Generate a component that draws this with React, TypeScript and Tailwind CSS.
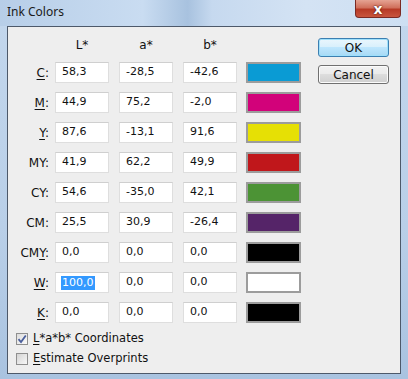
import React from "react";

type Row = { label: React.ReactNode; v: [string, string, string]; color: string; selected?: boolean };

const U = ({ c }: { c: string }) => <span className="underline underline-offset-2">{c}</span>;

const rows: Row[] = [
  { label: <><U c="C" />:</>, v: ["58,3", "-28,5", "-42,6"], color: "#0a9bd4" },
  { label: <><U c="M" />:</>, v: ["44,9", "75,2", "-2,0"], color: "#d2027a" },
  { label: <><U c="Y" />:</>, v: ["87,6", "-13,1", "91,6"], color: "#e6e005" },
  { label: <>MY:</>, v: ["41,9", "62,2", "49,9"], color: "#c0171b" },
  { label: <>CY:</>, v: ["54,6", "-35,0", "42,1"], color: "#4c9335" },
  { label: <>CM:</>, v: ["25,5", "30,9", "-26,4"], color: "#552468" },
  { label: <>CM<U c="Y" />:</>, v: ["0,0", "0,0", "0,0"], color: "#000000" },
  { label: <><U c="W" />:</>, v: ["100,0", "0,0", "0,0"], color: "#ffffff", selected: true },
  { label: <><U c="K" />:</>, v: ["0,0", "0,0", "0,0"], color: "#000000" },
];

function Input({ value, selected }: { value: string; selected?: boolean }) {
  return (
    <div className="w-[54px] h-[21px] bg-white border border-[#dedede] border-t-[#cfcfcf] flex items-center pl-[5px]">
      {selected ? (
        <span className="bg-[#3399ff] text-white leading-[14px] px-[1px]">{value}</span>
      ) : (
        <span className="px-[1px]">{value}</span>
      )}
    </div>
  );
}

export default function App() {
  return (
    <div
      className="w-[408px] h-[379px] relative overflow-hidden bg-[linear-gradient(180deg,#c3d7ed_0%,#b9cfe8_60%,#a9c3e0_100%)] text-[#111] text-[11px]"
      style={{ fontFamily: '"DejaVu Sans", Tahoma, sans-serif' }}
    >
      {/* title bar */}
      <div className="h-[26px] flex items-center pl-[7px] bg-[linear-gradient(90deg,#b7cee8_0%,#c9dcf1_35%,#a8c2df_46%,#c6d9ef_52%,#d4e3f4_75%,#cddff2_100%)]">
        <span className="text-[12px] text-[#1a1a1a] -mt-[2px]" style={{ fontFamily: '"Noto Sans", sans-serif' }}>
          Ink Colors
        </span>
      </div>
      {/* close button */}
      <div className="absolute left-[355px] top-0 w-[46px] h-[18px] rounded-b-[4px] border border-t-0 border-[#7a2a24] bg-[linear-gradient(180deg,#e5a393_0%,#d0705c_45%,#b73a26_55%,#c8553e_100%)] flex items-center justify-center">
        <span className="text-white text-[14px] font-bold leading-[16px]" style={{ fontFamily: '"DejaVu Sans", sans-serif', textShadow: "0 0 2px #5a1a10, 0 0 1px #5a1a10" }}>
          x
        </span>
      </div>

      {/* client area */}
      <div className="mx-[7px] h-[348px] border border-[#4d596a] bg-[#eeeeee] flex">
        <div className="flex flex-col">
          {/* header */}
          <div className="flex mt-[11px] h-[14px] items-center text-[12px]">
            <div className="w-[41px]" />
            <div className="ml-[6px] w-[54px] text-center">L*</div>
            <div className="ml-[10px] w-[54px] text-center">a*</div>
            <div className="ml-[10px] w-[54px] text-center">b*</div>
          </div>
          <div className="flex flex-col gap-[9px] mt-[10px]">
            {rows.map((r, i) => (
              <div key={i} className="flex items-center h-[21px]">
                <div className="w-[41px] text-right text-[12px]">{r.label}</div>
                <div className="ml-[6px]">
                  <Input value={r.v[0]} selected={r.selected} />
                </div>
                <div className="ml-[10px]">
                  <Input value={r.v[1]} />
                </div>
                <div className="ml-[10px]">
                  <Input value={r.v[2]} />
                </div>
                <div
                  className="ml-[9px] w-[55px] h-[21px] border-2 border-[#9c9c9c]"
                  style={{ backgroundColor: r.color }}
                />
              </div>
            ))}
          </div>
          {/* checkboxes */}
          <div className="flex flex-col gap-[4px] mt-[8px] pl-[8px] text-[11.5px]">
            <div className="flex items-center h-[16px] gap-[5px]">
              <div className="w-[12px] h-[12px] border border-[#8f8f8f] bg-[linear-gradient(135deg,#dcdcdc,#fafafa)] flex items-center justify-center">
                <svg width="10" height="10" viewBox="0 0 10 10">
                  <path d="M1.5 5.2 L4 8 L8.8 1.5" fill="none" stroke="#4a5f9c" strokeWidth="1.8" />
                </svg>
              </div>
              <span>
                <U c="L" />*a*b* Coordinates
              </span>
            </div>
            <div className="flex items-center h-[16px] gap-[5px]">
              <div className="w-[12px] h-[12px] border border-[#8f8f8f] bg-[linear-gradient(135deg,#d4d4d4,#f8f8f8)]" />
              <span>
                <U c="E" />stimate Overprints
              </span>
            </div>
          </div>
        </div>
        {/* buttons */}
        <div className="ml-[17px] mt-[11px] flex flex-col gap-[8px] text-[12px]">
          <div className="w-[71px] h-[19px] rounded-[3px] border border-[#3c7fb1] bg-[linear-gradient(180deg,#eaf6fd_0%,#d9f0fc_45%,#bee6fd_50%,#a7d9f5_100%)] shadow-[inset_0_0_0_1px_#9fe0fb] flex items-center justify-center">
            OK
          </div>
          <div className="w-[71px] h-[19px] rounded-[3px] border border-[#707070] bg-[linear-gradient(180deg,#f2f2f2_0%,#ebebeb_45%,#dddddd_50%,#cfcfcf_100%)] shadow-[inset_0_0_0_1px_#fbfbfb] flex items-center justify-center">
            Cancel
          </div>
        </div>
      </div>
    </div>
  );
}
